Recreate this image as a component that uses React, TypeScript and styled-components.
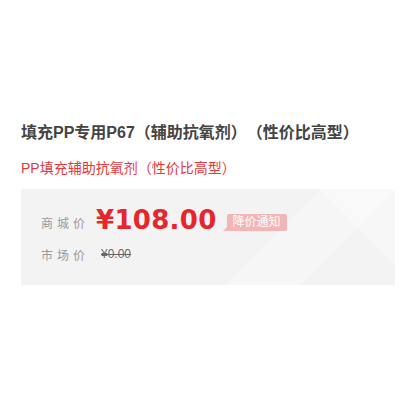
import React from "react";
import styled, { createGlobalStyle } from "styled-components";

const GlobalStyle = createGlobalStyle`
    html, body {
        margin: 0;
        padding: 0;
        background: #fff;
        font-family: "Liberation Sans", "Noto Sans CJK SC", sans-serif;
        text-spacing-trim: space-all;
        font-feature-settings: "chws" 0, "halt" 0;
    }
`

const Page = styled.div`
    width: 400px;
    height: 400px;
    box-sizing: border-box;
    padding: 122px 5px 0 21px;
`

const Title = styled.h1`
    margin: 0;
    font-family: "Liberation Sans", "Noto Sans CJK SC", sans-serif;
    font-size: 16px;
    font-weight: 700;
    line-height: 22px;
    color: #444;
    white-space: nowrap;
`

const SubTitle = styled.p`
    margin: 15px 0 0;
    font-size: 14px;
    line-height: 19px;
    color: #e4393c;
`

const PricePanel = styled.div`
    margin-top: 11px;
    height: 96px;
    box-sizing: border-box;
    padding: 14px 20px 0;
    background-color: #f3f3f3;
    background-image:
        linear-gradient(135deg, transparent 64%, rgba(255, 255, 255, 0.3) 64%, rgba(255, 255, 255, 0.3) 80%, transparent 80%),
        linear-gradient(45deg, transparent 84%, rgba(255, 255, 255, 0.35) 84%);
    display: flex;
    flex-direction: column;
`

const Row = styled.div<{ height: number }>`
    display: flex;
    align-items: center;
    height: ${props => props.height}px;
`

const Label = styled.span`
    width: 55px;
    flex-shrink: 0;
    font-size: 12px;
    letter-spacing: 4px;
    color: #999;
`

const Price = styled.span`
    font-family: "DejaVu Sans", sans-serif;
    font-size: 26px;
    font-weight: 700;
    color: #e5262b;
    line-height: 1;
    letter-spacing: 0.3px;
    margin-top: -4px;
`

const Badge = styled.span`
    position: relative;
    margin-left: 10px;
    padding: 0 6px;
    height: 17px;
    line-height: 17px;
    font-size: 12px;
    color: #fff;
    background: #f3b6b6;
    border-radius: 2px;
    &:before {
        content: "";
        position: absolute;
        left: -4px;
        bottom: 0;
        border-style: solid;
        border-width: 0 0 5px 5px;
        border-color: transparent transparent #f3b6b6 transparent;
    }
`

const OldPrice = styled.span`
    margin-left: 5px;
    font-size: 12px;
    color: #666;
    text-decoration: line-through;
`

export default function App() {
    return (
        <>
            <GlobalStyle />
            <Page>
                <Title>填充PP专用P67（辅助抗氧剂）（性价比高型）</Title>
                <SubTitle>PP填充辅助抗氧剂（性价比高型）</SubTitle>
                <PricePanel>
                    <Row height={38}>
                        <Label>商城价</Label>
                        <Price>¥108.00</Price>
                        <Badge>降价通知</Badge>
                    </Row>
                    <Row height={26}>
                        <Label>市场价</Label>
                        <OldPrice>¥0.00</OldPrice>
                    </Row>
                </PricePanel>
            </Page>
        </>
    );
}
